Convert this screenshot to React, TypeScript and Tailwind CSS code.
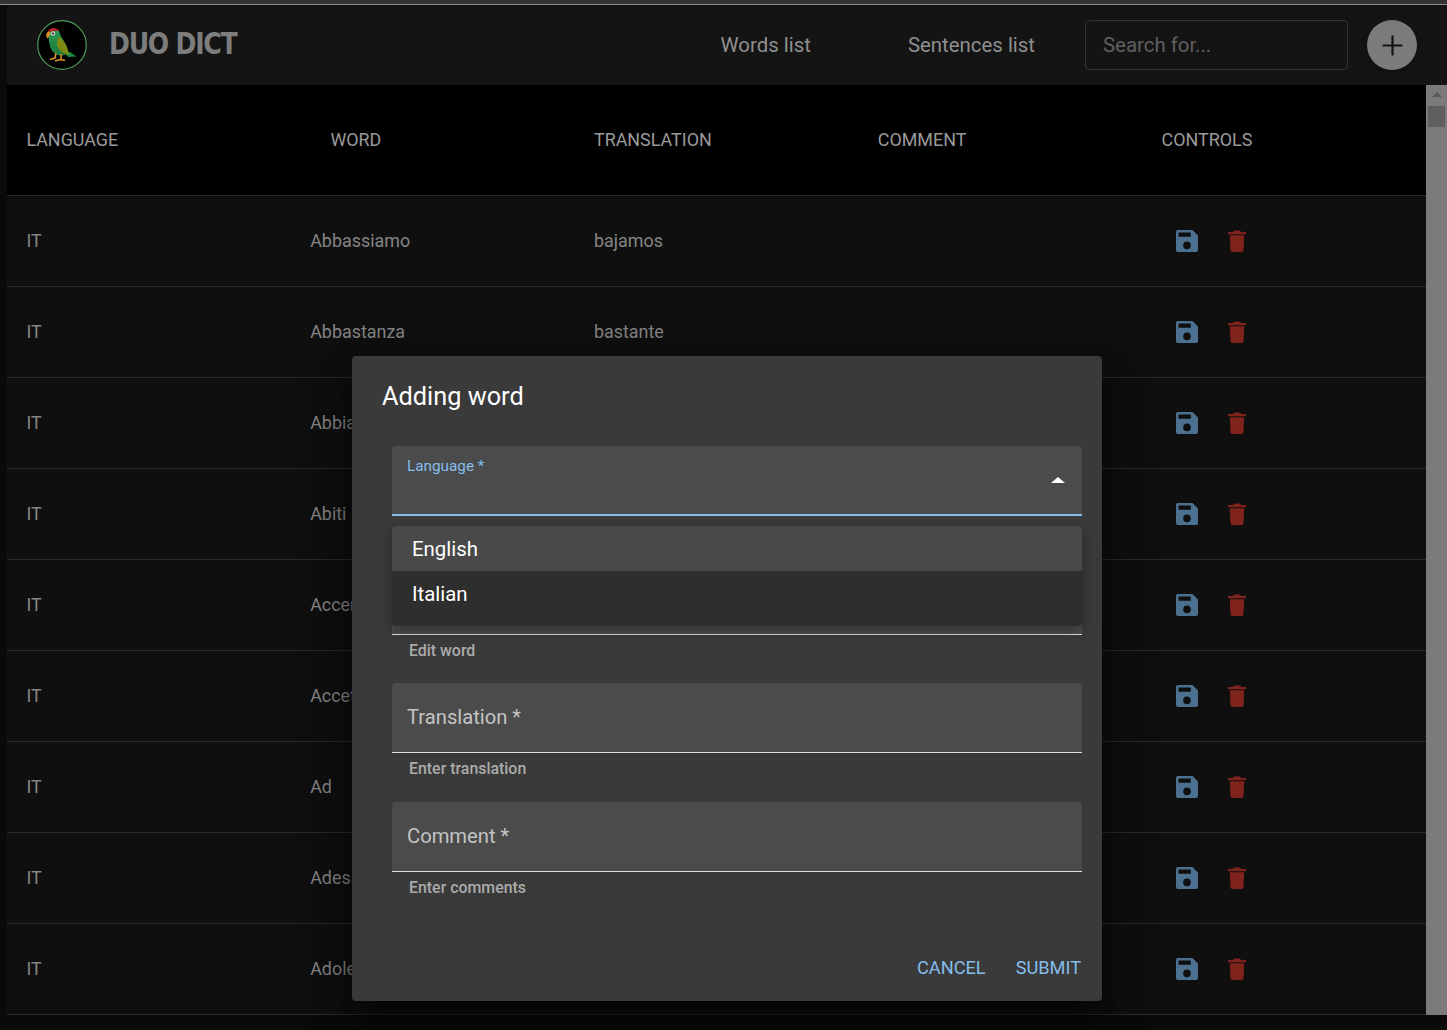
import { Plus } from 'lucide-react';

const rows = [
  { word: 'Abbassiamo', translation: 'bajamos' },
  { word: 'Abbastanza', translation: 'bastante' },
  { word: 'Abbiamo', translation: 'tenemos' },
  { word: 'Abiti', translation: 'vestidos' },
  { word: 'Accento', translation: 'acento' },
  { word: 'Accetto', translation: 'acepto' },
  { word: 'Ad', translation: 'a' },
  { word: 'Adesso', translation: 'ahora' },
  { word: 'Adolescente', translation: 'adolescente' },
];

const Parrot = () => (
  <svg viewBox="0 0 50 50" className="w-[50px] h-[50px] shrink-0">
    <defs>
      <linearGradient id="body" x1="0" y1="0" x2="0" y2="1">
        <stop offset="0%" stopColor="#2f9a58" />
        <stop offset="100%" stopColor="#1a7a38" />
      </linearGradient>
    </defs>
    <circle cx="25" cy="25" r="24.3" fill="#000" stroke="#4c9a55" strokeWidth="1.2" />
    {/* tail */}
    <path d="M26 31 L33 32 L39.5 36.5 L31 37 Z" fill="#1c8a45" />
    {/* body */}
    <path d="M11 14 C11 8 22 6 23 14 C24 17 29 22 31 33 C29 36 20 37 16 32 C12 27 12 20 11 14 Z" fill="url(#body)" />
    {/* wing */}
    <path d="M21 17 C27 19 31 27 32 35 C27 34 21 31 20 24 Z" fill="#7c8a12" />
    {/* red cap */}
    <path d="M11 13 C11 7 20 6 22.5 11.5 C20 10.5 14 10.5 11 13 Z" fill="#b5252a" />
    {/* beak */}
    <path d="M12 11.5 C9 12 8.5 16 10.5 18.5 C12 16.5 13.5 15 13.5 13 Z" fill="#d9932a" />
    {/* eye */}
    <circle cx="16" cy="13.5" r="2.2" fill="#d8d8c8" />
    <circle cx="16" cy="13.5" r="1" fill="#111" />
    {/* feet */}
    <path d="M19 33 L18 38 L13 39.5 M24 34 L24 39.5 L18 41 M24 39.5 L28 40.5" stroke="#d9932a" strokeWidth="1.6" fill="none" />
  </svg>
);

const SaveIcon = () => (
  <svg viewBox="0 0 22 22" className="w-[22px] h-[22px]">
    <path
      fillRule="evenodd"
      fill="#4c7190"
      d="M2 0 H16.5 L22 5.5 V20 a2 2 0 0 1 -2 2 H2 a2 2 0 0 1 -2 -2 V2 a2 2 0 0 1 2 -2 Z M2.5 2.6 V6.8 H14.8 V2.6 Z M11 11.6 a3.8 3.8 0 1 0 0 7.6 a3.8 3.8 0 1 0 0 -7.6 Z"
    />
  </svg>
);

const TrashIcon = () => (
  <svg viewBox="0 0 18 22" className="w-[18px] h-[22px]" fill="#7f231c">
    <path d="M6 0.5 h6 l1 1.5 h5 v2.2 h-18 v-2.2 h5 z" />
    <path d="M1.8 5.2 h14.4 l-0.7 15 a1.8 1.8 0 0 1 -1.8 1.8 h-9.4 a1.8 1.8 0 0 1 -1.8 -1.8 z" />
  </svg>
);

const Field = ({ label, helper }: { label?: string; helper: string }) => (
  <div>
    <div className="h-[70px] bg-[#4b4b4b] rounded-t border-b border-[#e0e0e0] flex items-center pl-[15px] text-[20.2px] text-[#c4c4c4]">
      {label && `${label} *`}
    </div>
    <p className="mt-[7px] pl-[17px] text-[15.9px] leading-[18px] font-medium text-[#ababab] h-[23px]">{helper}</p>
  </div>
);

export default function App() {
  return (
    <div className="relative h-screen overflow-hidden bg-[#0a0a0a] font-['Roboto',sans-serif]">
      <div className="h-[5px] bg-[#333333] border-b border-[#8c8c8c]" />

      <div className="pl-[7px] flex flex-col">
        {/* Header */}
        <header className="h-20 bg-[#141414] flex items-center pl-[30px] pr-[30px]">
          <Parrot />
          <span className="ml-[22px] mb-[3px] text-[30px] font-bold font-['DejaVu_Sans',sans-serif] tracking-[-1.5px] text-[#7d7d7d] scale-x-[0.84] origin-left">
            DUO DICT
          </span>
          <nav className="ml-auto flex items-center gap-[97px] text-[20.4px] text-[#8f8f8f]">
            <span>Words list</span>
            <span>Sentences list</span>
          </nav>
          <div className="ml-[50px] w-[263px] h-[50px] border border-[#333333] rounded flex items-center pl-[17px] text-[20.4px] text-[#5f5f5f]">
            Search for...
          </div>
          <button className="ml-[19px] w-[50px] h-[50px] rounded-full bg-[#7b7b7b] flex items-center justify-center shadow-lg">
            <Plus className="w-[31px] h-[31px] text-[#141414]" strokeWidth={1.7} />
          </button>
        </header>

        <div className="flex">
          {/* Table */}
          <div className="flex-1 bg-[#0f0f0f]">
            <div className="h-[111px] grid grid-cols-5 items-center bg-black border-b border-[#2a2a2a] text-[17.9px] text-[#9a9a9a]">
              <span className="pl-[19.4px]">LANGUAGE</span>
              <span className="pl-[39.6px]">WORD</span>
              <span className="pl-[19.4px]">TRANSLATION</span>
              <span className="pl-[19.4px]">COMMENT</span>
              <span className="pl-[19.4px]">CONTROLS</span>
            </div>
            {rows.map((row) => (
              <div
                key={row.word}
                className="h-[91px] grid grid-cols-5 items-center border-b border-[#2a2a2a] text-[17.9px] text-[#858585]"
              >
                <span className="pl-[19.4px]">IT</span>
                <span className="pl-[19.4px]">{row.word}</span>
                <span className="pl-[19.4px]">{row.translation}</span>
                <span />
                <div className="pl-[34px] flex items-center gap-[30px]">
                  <SaveIcon />
                  <TrashIcon />
                </div>
              </div>
            ))}
          </div>

          {/* Scrollbar */}
          <div className="w-[21px] bg-[#7b7b7b] flex flex-col items-center pt-[7px]">
            <div className="w-0 h-0 border-l-[5px] border-r-[5px] border-b-[5px] border-l-transparent border-r-transparent border-b-[#5a5a5a]" />
            <div className="mt-[9px] w-[17px] h-[21px] bg-[#5f5f5f]" />
          </div>
        </div>
      </div>

      {/* Dialog */}
      <div className="absolute left-[352px] top-[356px] w-[750px] h-[645px] bg-[#3a3a3a] rounded shadow-[0_11px_15px_-7px_rgba(0,0,0,0.4),0_24px_38px_3px_rgba(0,0,0,0.3),0_9px_46px_8px_rgba(0,0,0,0.25)] flex flex-col">
        <h2 className="pl-[30px] pt-[24px] text-[25.3px] leading-[34px] font-normal text-white">Adding word</h2>

        <div className="relative mt-[32px] ml-10 mr-5 flex flex-col gap-[18.5px]">
          <div>
            <div className="relative h-[70px] bg-[#4b4b4b] rounded-t border-b-2 border-[#85bdec] pl-[15px] pt-[10px] text-[15.3px] leading-5 text-[#85bdec]">
              Language *
              <div className="absolute right-[17px] top-[31px] w-0 h-0 border-l-[7px] border-r-[7px] border-b-[6px] border-l-transparent border-r-transparent border-b-white" />
            </div>
            <div className="h-[30px]" />
          </div>
          <Field helper="Edit word" />
          <Field label="Translation" helper="Enter translation" />
          <Field label="Comment" helper="Enter comments" />

          {/* Select menu */}
          <div className="absolute left-0 right-0 top-[80px] bg-[#2e2e2e] rounded pb-[10px] shadow-[0_5px_15px_rgba(0,0,0,0.3)] text-[20.4px] text-white">
            <div className="h-[45px] pt-[2px] bg-[#494949] flex items-center pl-5 rounded-t">English</div>
            <div className="h-[45px] pt-[2px] flex items-center pl-5">Italian</div>
          </div>
        </div>

        <div className="mt-auto pb-[21px] pr-[21px] flex justify-end gap-[30px] text-[18.2px] leading-[24px] text-[#85bdec]">
          <span>CANCEL</span>
          <span>SUBMIT</span>
        </div>
      </div>
    </div>
  );
}
